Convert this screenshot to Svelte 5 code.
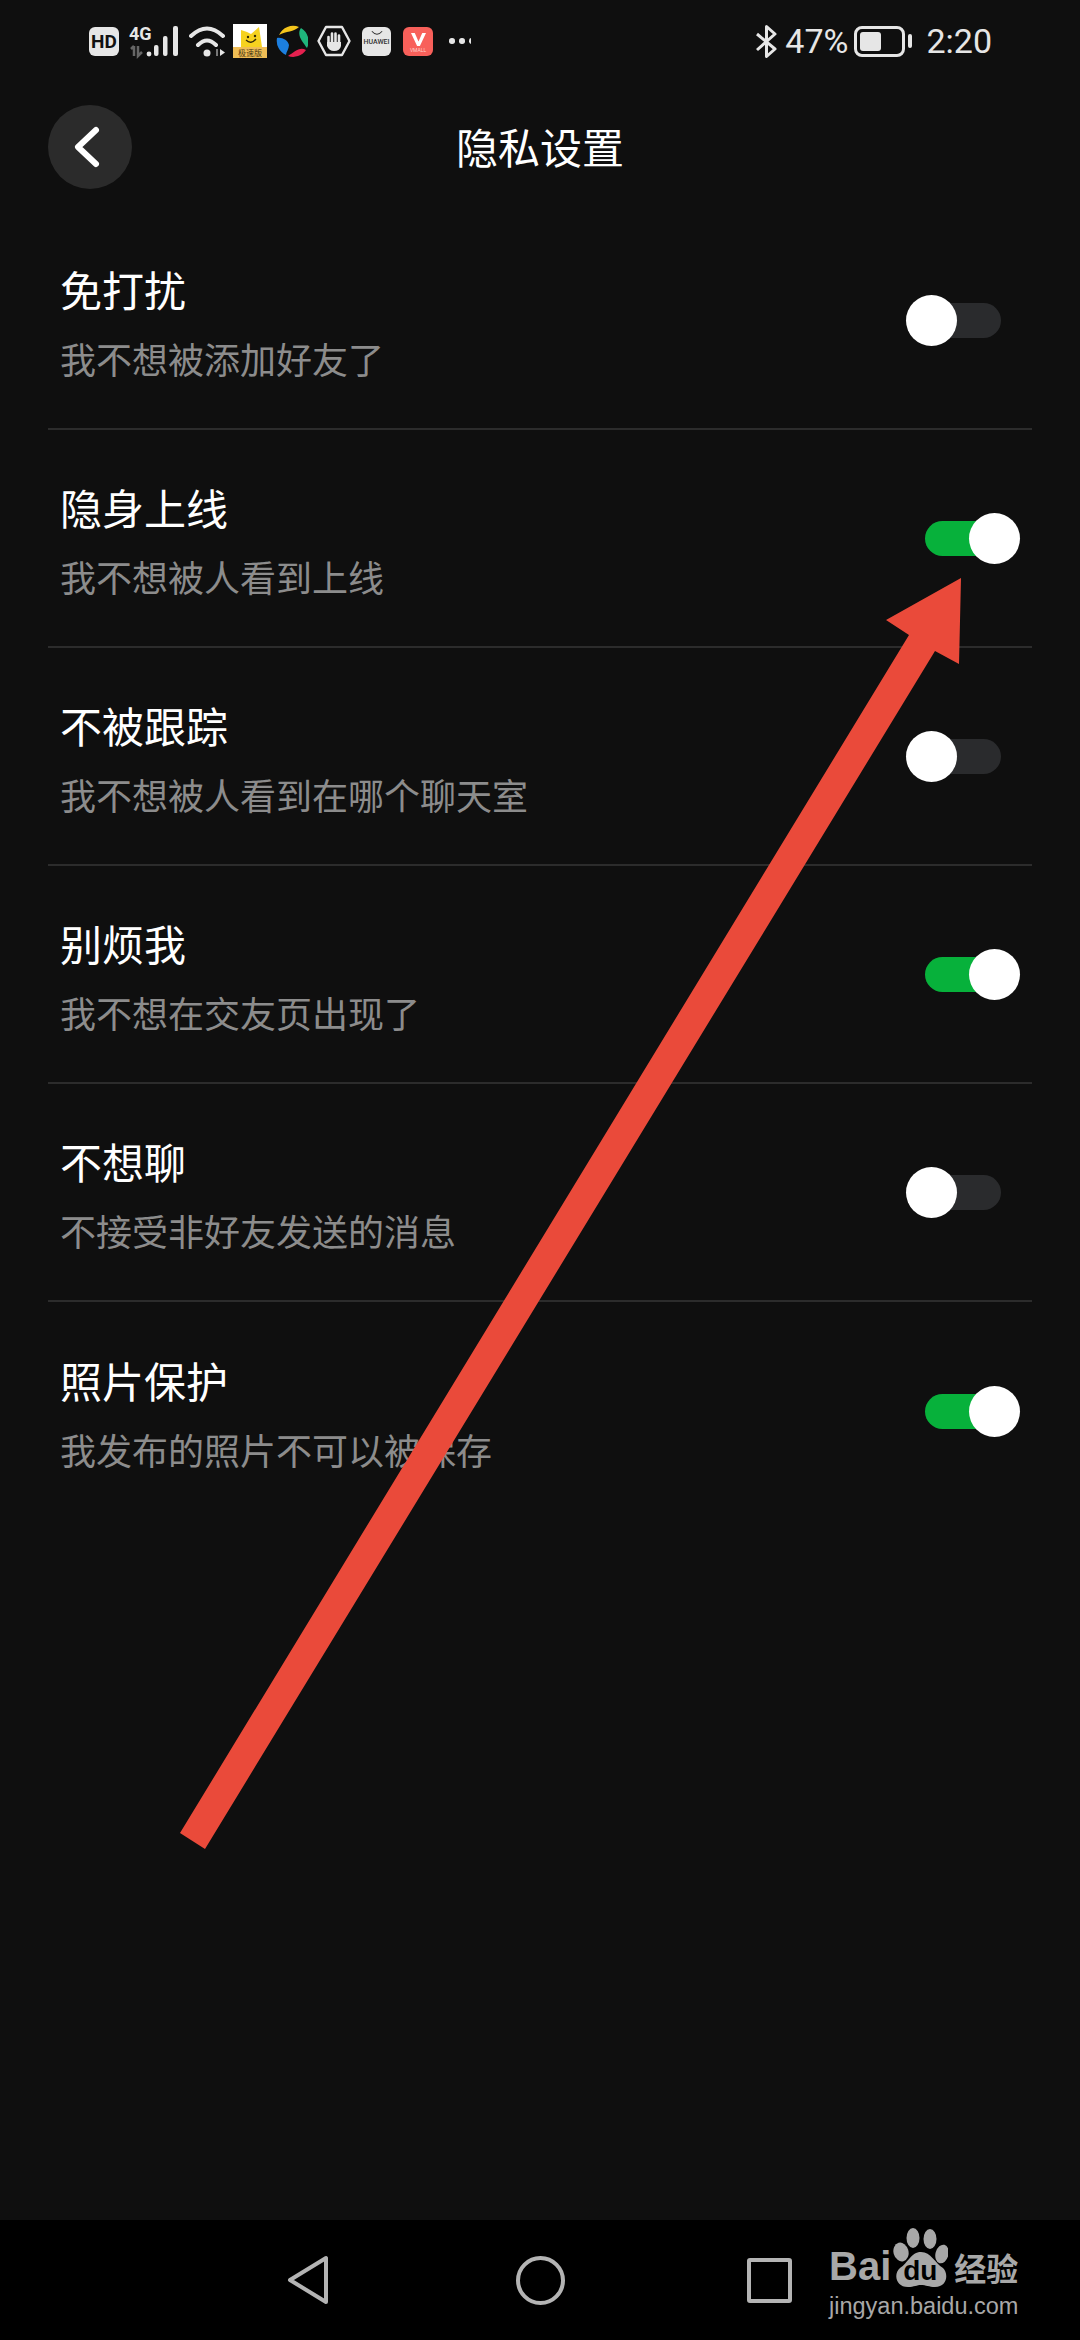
<script lang="ts">
    let rows=$state([
        {title:'免打扰',sub:'我不想被添加好友了',on:false},
        {title:'隐身上线',sub:'我不想被人看到上线',on:true},
        {title:'不被跟踪',sub:'我不想被人看到在哪个聊天室',on:false},
        {title:'别烦我',sub:'我不想在交友页出现了',on:true},
        {title:'不想聊',sub:'不接受非好友发送的消息',on:false},
        {title:'照片保护',sub:'我发布的照片不可以被保存',on:true}
    ]);
</script>

<div class="page">
    <div class="status">
        <div class="status-left">
            <span class="hd">HD</span>
            <svg class="net" viewBox="0 0 50 32">
                <text x="0" y="15" class="net-label">4G</text>
                <path d="M5 21v10M2 24l3-3M9 21v10l4-4" class="net-dim"/>
                <circle cx="20" cy="29" r="2.4" fill="#e6e6e6"/>
                <rect x="25" y="20" width="4.5" height="11" rx="2" fill="#e6e6e6"/>
                <rect x="34" y="11" width="4.5" height="20" rx="2" fill="#e6e6e6"/>
                <rect x="44" y="1" width="5" height="30" rx="2" fill="#e6e6e6"/>
            </svg>
            <svg class="wifi" viewBox="0 0 36 32">
                <path d="M2 11Q18 -4 34 11M9 20Q18 11 27 20" fill="none" stroke="#e6e6e6" stroke-width="4" stroke-linecap="round"/>
                <circle cx="18" cy="28" r="3.5" fill="#e6e6e6"/>
                <path d="M28 24v7" stroke="#777" stroke-width="2"/>
                <path d="M31 24l5 3.5-5 3.5z" fill="#e6e6e6"/>
            </svg>
            <svg class="app-yellow" viewBox="0 0 34 34">
                <rect width="34" height="34" fill="#fff"/>
                <path d="M8 6l6 2 4 2 8-7 3 20H8z" fill="#f6d21f"/>
                <circle cx="15" cy="13" r="1.2" fill="#33290a"/>
                <circle cx="22" cy="12" r="1.2" fill="#33290a"/>
                <path d="M13 16q5 5 10-1" fill="none" stroke="#33290a" stroke-width="1.3"/>
                <rect y="23" width="34" height="11" fill="#efbd55"/>
                <text x="17" y="32" class="app-yellow-label">极速版</text>
            </svg>
            <svg class="app-swirl" viewBox="-16 -16 32 32">
                <path d="M-13 -6A15.5 15.5 0 0 1 7 -14C2 -9 -6 -10 -13 -6z" fill="#f4c51c"/>
                <path d="M9 -13A15.5 15.5 0 0 1 15 7C11 1 4 -6 9 -13z" fill="#1fb57c"/>
                <path d="M14 9A15.5 15.5 0 0 1 -4 15C2 11 8 5 14 9z" fill="#e5214f"/>
                <path d="M-6 14A15.5 15.5 0 0 1 -15 -3C-10 -4 -4 -1 -3 4C-3 8 -6 11 -6 14z" fill="#1c7fe0"/>
            </svg>
            <svg class="app-hex" viewBox="0 0 34 32">
                <path d="M9 2H25L32.5 16 25 30H9L1.5 16z" fill="none" stroke="#e6e6e6" stroke-width="2.4" stroke-linejoin="round"/>
                <path d="M11.5 12v7M15 8.5v9M18.5 8.5v9M22 10.5v8" stroke="#e6e6e6" stroke-width="2.6" stroke-linecap="round"/>
                <path d="M10 17h14v4q-1 5-7 5-5 0-7-5z" fill="#e6e6e6"/>
            </svg>
            <div class="app-huawei">
                <svg viewBox="0 0 14 6"><path d="M1 1q6 7 12 0" fill="none" stroke="#333" stroke-width="1.2"/></svg>
                <span>HUAWEI</span>
            </div>
            <div class="app-vmall">
                <svg viewBox="0 0 20 16"><path d="M2 1h4l4 9 4-9h4l-6.500 14h-3z" fill="#fff"/></svg>
                <span>VMALL</span>
            </div>
            <div class="dots"><i></i><i></i><i></i></div>
        </div>
        <div class="status-right">
            <svg class="bt" viewBox="0 0 21 33"><path d="M1 9L19 24 10.500 31.500V1.500L19 9 1 25" fill="none" stroke="#e6e6e6" stroke-width="3" stroke-linejoin="round"/></svg>
            <span class="pct">47%</span>
            <div class="battery"><div class="battery-body"><div class="battery-fill"></div></div><div class="battery-nub"></div></div>
            <span class="time">2:20</span>
        </div>
    </div>

    <header class="header">
        <button class="back" aria-label="返回">
            <svg viewBox="0 0 84 84"><path d="M48 25L30 42 48 59" fill="none" stroke="#fff" stroke-width="6" stroke-linecap="round" stroke-linejoin="round"/></svg>
        </button>
        <h1>隐私设置</h1>
    </header>

    <main class="list">
        {#each rows as row,r (r)}
            <div class="row">
                <div class="row-text">
                    <div class="row-title">{row.title}</div>
                    <div class="row-sub">{row.sub}</div>
                </div>
                <button class="toggle" class:on={row.on} aria-label={row.title} onclick={()=>row.on=!row.on}>
                    <span class="thumb"></span>
                </button>
            </div>
        {/each}
    </main>

    <nav class="nav">
        <svg class="nav-back" viewBox="0 0 42 50"><path d="M39 3V47L3 25z" fill="none" stroke="#b4b4b4" stroke-width="4" stroke-linejoin="round"/></svg>
        <span class="nav-home"></span>
        <span class="nav-recent"></span>
    </nav>

    <!-- annotation and watermark sit on top of the screenshot -->
    <svg class="arrow" viewBox="0 0 1080 2340">
        <polygon points="961,578 886,620 909,635 180,1833 205,1849 935,651 959,664" fill="#ea4a3a"/>
    </svg>

    <div class="watermark">
        <div class="wm-top">
            <span class="wm-bai">Bai</span>
            <div class="wm-paw">
                <svg viewBox="0 0 56 60">
                    <ellipse cx="9" cy="25" rx="7.500" ry="9.500" fill="#a8a8a8" transform="rotate(-15 9 25)"/>
                    <ellipse cx="21" cy="11" rx="6.500" ry="10" fill="#a8a8a8"/>
                    <ellipse cx="38" cy="12" rx="6.500" ry="10" fill="#a8a8a8"/>
                    <ellipse cx="50" cy="27" rx="6.500" ry="9.500" fill="#a8a8a8" transform="rotate(15 50 27)"/>
                    <path d="M29 25C19 25 16 36 8 41 1 47 4 60 16 60 22 60 25 58 29 58 34 58 37 60 43 60 55 60 57 47 51 41 43 36 39 25 29 25z" fill="#a8a8a8"/>
                </svg>
                <span>du</span>
            </div>
            <span class="wm-cn">经验</span>
        </div>
        <div class="wm-url">jingyan.baidu.com</div>
    </div>
</div>

<style>
    :global(body){
        margin:0;
        background:#0f0f0f;
    }

    .page{
        position:relative;
        width:1080px;
        height:2340px;
        overflow:hidden;
        background:#0f0f0f;
        display:flex;
        flex-flow:column nowrap;
        font-family:"Noto Sans CJK SC","Noto Sans",sans-serif;
        color:#fff;
    }

    /* status bar */
    .status{
        height:82px;
        flex:none;
        display:flex;
        justify-content:space-between;
        align-items:center;
        padding:0 88px 0 89px;
        color:#e6e6e6;
        font-family:Roboto,sans-serif;
    }
    .status-left,.status-right{
        display:flex;
        align-items:center;
    }
    .hd{
        width:30px;
        height:29px;
        border-radius:6px;
        background:#e6e6e6;
        color:#111;
        font-size:19px;
        font-weight:700;
        line-height:29px;
        text-align:center;
        margin-right:10px;
    }
    .net{
        width:50px;
        height:32px;
        margin-right:10px;
        overflow:visible;
    }
    .net-label{
        font-family:Roboto,sans-serif;
        font-size:18px;
        font-weight:700;
        fill:#e6e6e6;
    }
    .net-dim{
        fill:none;
        stroke:#666;
        stroke-width:2.500;
    }
    .wifi{
        width:36px;
        height:32px;
        margin-right:8px;
    }
    .app-yellow{
        width:34px;
        height:34px;
        margin-right:9px;
    }
    .app-yellow-label{
        font-size:8px;
        text-anchor:middle;
        fill:#4a3510;
        font-family:"Noto Sans CJK SC",sans-serif;
    }
    .app-swirl{
        width:32px;
        height:32px;
        margin-right:9px;
    }
    .app-hex{
        width:34px;
        height:32px;
        margin-right:11px;
    }
    .app-huawei{
        width:29px;
        height:29px;
        border-radius:6px;
        background:#e6e6e6;
        margin-right:12px;
        display:flex;
        flex-flow:column nowrap;
        align-items:center;
        padding-top:3px;
        box-sizing:border-box;
        color:#333;
        font-size:7px;
        line-height:8px;
        font-weight:500;
    }
    .app-huawei svg{
        width:12px;
        height:6px;
        margin-bottom:2px;
    }
    .app-vmall{
        width:30px;
        height:29px;
        border-radius:6px;
        background:#f8605a;
        margin-right:16px;
        display:flex;
        flex-flow:column nowrap;
        align-items:center;
        padding-top:5px;
        box-sizing:border-box;
        color:#ffd0cc;
        font-size:5px;
        line-height:6px;
    }
    .app-vmall svg{
        width:19px;
        height:15px;
    }
    .dots{
        display:flex;
        gap:4.500px;
        width:22px;
        overflow:hidden;
    }
    .dots i{
        flex:none;
        width:5.500px;
        height:5.500px;
        border-radius:50%;
        background:#e6e6e6;
    }
    .bt{
        width:21px;
        height:33px;
        margin-right:8px;
    }
    .pct,.time{
        font-size:34px;
        line-height:40px;
    }
    .pct{
        margin-right:6px;
    }
    .battery{
        display:flex;
        align-items:center;
        gap:3px;
        margin-right:14px;
    }
    .battery-body{
        width:51px;
        height:31px;
        box-sizing:border-box;
        border:3px solid #e6e6e6;
        border-radius:8px;
        padding:3px;
    }
    .battery-fill{
        width:21px;
        height:100%;
        background:#e6e6e6;
        border-radius:3px;
    }
    .battery-nub{
        width:4px;
        height:14px;
        border-radius:2px;
        background:#e6e6e6;
    }

    /* header */
    .header{
        height:130px;
        flex:none;
        display:grid;
        grid-template-columns:1fr auto 1fr;
        align-items:center;
        padding:0 48px;
    }
    .back{
        width:84px;
        height:84px;
        padding:0;
        border:none;
        border-radius:50%;
        background:#2b2b2b;
    }
    .back svg{
        display:block;
    }
    h1{
        margin:0 0 3px;
        font-size:42px;
        font-weight:400;
        line-height:56px;
    }

    /* rows */
    .list{
        flex:1;
        padding:0 48px;
    }
    .row{
        height:218px;
        box-sizing:border-box;
        border-bottom:2px solid #2c2c2c;
        padding:0 12px;
        display:flex;
        justify-content:space-between;
        align-items:center;
    }
    .row:last-child{
        border-bottom:none;
    }
    .row-text{
        margin-top:4px;
    }
    .row-title{
        font-size:42px;
        line-height:56px;
        margin-bottom:16px;
    }
    .row-sub{
        font-size:36px;
        line-height:50px;
        color:#8c8c8c;
    }
    .toggle{
        position:relative;
        width:114px;
        height:51px;
        padding:0;
        border:none;
        background:transparent;
    }
    .toggle::before{
        content:'';
        position:absolute;
        left:19px;
        right:19px;
        top:8px;
        height:35px;
        border-radius:18px;
        background:#2a2b2d;
    }
    .toggle.on::before{
        background:#07b13b;
    }
    .thumb{
        position:absolute;
        left:0;
        top:0;
        width:51px;
        height:51px;
        border-radius:50%;
        background:#fff;
    }
    .toggle.on .thumb{
        left:auto;
        right:0;
    }

    /* nav bar */
    .nav{
        height:120px;
        flex:none;
        box-sizing:border-box;
        background:#000;
        display:flex;
        align-items:center;
        padding-left:287px;
    }
    .nav-back{
        width:42px;
        height:50px;
        margin-right:187px;
    }
    .nav-home{
        width:49px;
        height:49px;
        box-sizing:border-box;
        border:4px solid #b4b4b4;
        border-radius:50%;
        margin-right:182px;
    }
    .nav-recent{
        width:45px;
        height:45px;
        box-sizing:border-box;
        border:4px solid #b4b4b4;
        border-radius:3px;
    }

    /* overlays */
    .arrow{
        position:absolute;
        left:0;
        top:0;
        width:1080px;
        height:2340px;
        pointer-events:none;
    }
    .watermark{
        position:absolute;
        left:829px;
        top:2225px;
        width:196px;
        color:#a8a8a8;
        font-family:"Liberation Sans",sans-serif;
    }
    .wm-top{
        display:flex;
        align-items:flex-end;
        height:64px;
    }
    .wm-bai{
        font-size:40px;
        font-weight:700;
        line-height:46px;
    }
    .wm-paw{
        position:relative;
        width:56px;
        height:62px;
        margin-left:1px;
    }
    .wm-paw svg{
        display:block;
        width:56px;
        height:60px;
    }
    .wm-paw span{
        position:absolute;
        left:0;
        right:0;
        bottom:4px;
        text-align:center;
        font-size:28px;
        font-weight:700;
        line-height:28px;
        color:#000;
    }
    .wm-cn{
        font-family:"Noto Sans CJK SC",sans-serif;
        font-size:32px;
        font-weight:700;
        line-height:44px;
        margin-left:6px;
    }
    .wm-url{
        font-size:23.500px;
        line-height:30px;
        margin-top:2px;
    }
</style>
